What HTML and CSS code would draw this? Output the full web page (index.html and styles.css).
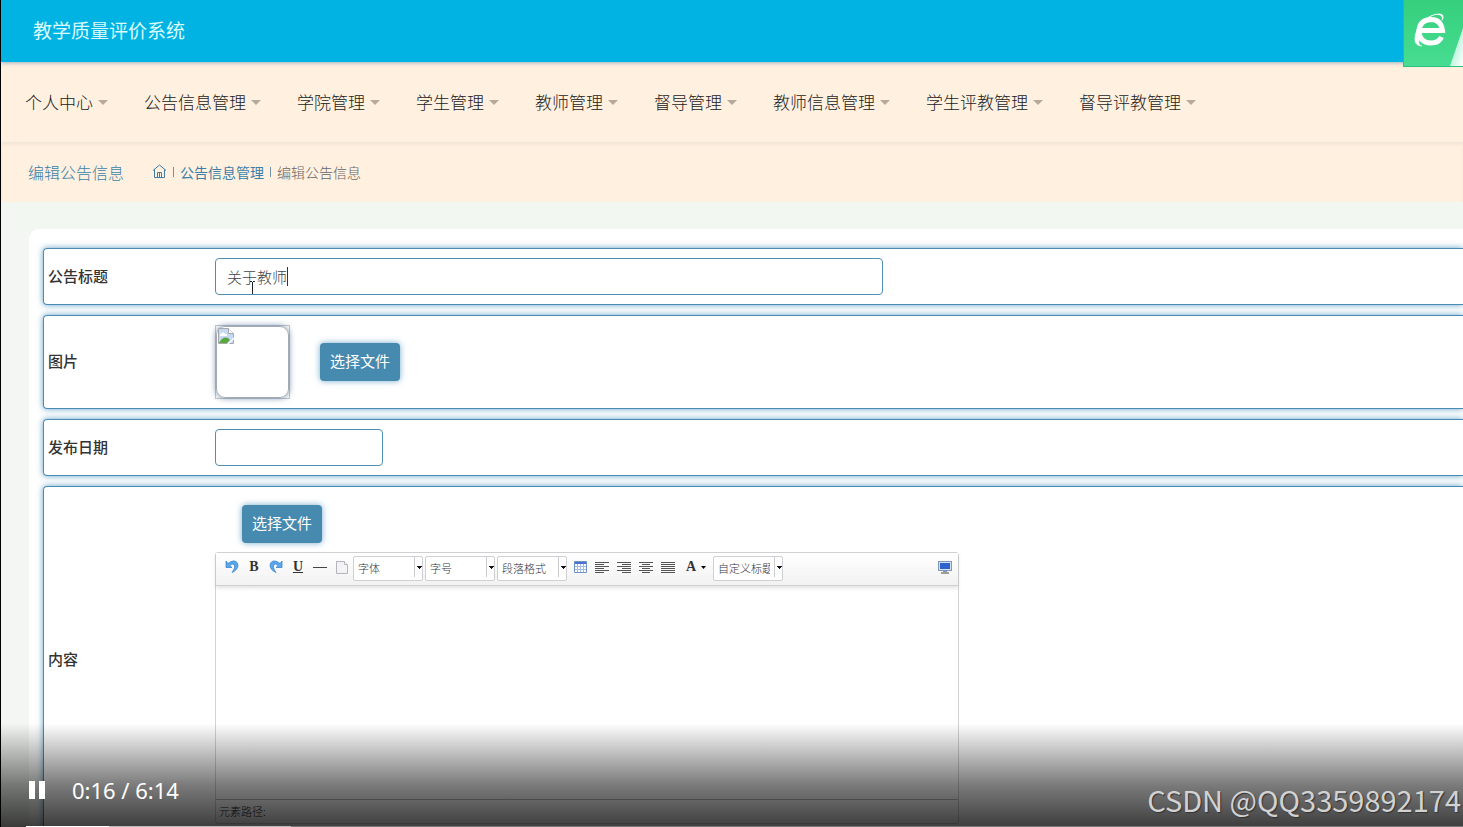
FILE: index.html
```html
<!DOCTYPE html>
<html lang="zh-CN">
<head>
<meta charset="utf-8">
<title>教学质量评价系统</title>
<link rel="stylesheet" href="styles.css">
</head>
<body>
<div class="player">
  <div class="screen">
    <header class="topbar"><h1 class="brand">教学质量评价系统</h1></header>
    <nav class="menu">
      <a class="menu-item" href="#">个人中心</a>
      <a class="menu-item" href="#">公告信息管理</a>
      <a class="menu-item" href="#">学院管理</a>
      <a class="menu-item" href="#">学生管理</a>
      <a class="menu-item" href="#">教师管理</a>
      <a class="menu-item" href="#">督导管理</a>
      <a class="menu-item" href="#">教师信息管理</a>
      <a class="menu-item" href="#">学生评教管理</a>
      <a class="menu-item" href="#">督导评教管理</a>
    </nav>
    <div class="crumbs">
      <h2 class="page-title">编辑公告信息</h2>
      <div class="trail">
        <a class="home" href="#" aria-label="首页"><svg width="15" height="15" viewBox="0 0 15 15" fill="none" stroke="currentColor"><path d="M1 6.5 7.5 1 14 6.5M2.5 5.5v8h10v-8M5.5 13.500v-5h4v5M7.500 8.500v5"/></svg></a>
        <span class="sep"></span>
        <a class="crumb" href="#">公告信息管理</a>
        <span class="sep"></span>
        <span class="current">编辑公告信息</span>
      </div>
    </div>
    <main class="content">
      <form class="card">
        <div class="row">
          <label class="label" for="title">公告标题</label>
          <input class="input input-wide" id="title" type="text" value="关于教师">
          <span class="caret"></span>
          <svg class="pointer" width="5" height="14" viewBox="0 0 5 14" fill="none" stroke="#222"><path d="M0 .5h2M3 .5h2M2.500 1v12"/></svg>
        </div>
        <div class="row">
          <span class="label">图片</span>
          <div class="thumb-frame"><div class="thumb">
            <svg width="16" height="16" viewBox="0 0 16 16"><path d="M.5.5h10l5 5v10H.5z" fill="#c5d8f5" stroke="#a8a8a8"/><path d="M10.500.5v5h5" fill="#fff" stroke="#a8a8a8"/><path d="M2 7q0-2 2-2 2-2 3 1h2v2H2z" fill="#fff"/><path d="M1 15q4-7 9-5l2 2-3 3z" fill="#58a83d"/><path d="m9 16 7-7v2l-5 5z" fill="#fff"/></svg>
          </div></div>
          <button class="btn" type="button">选择文件</button>
        </div>
        <div class="row">
          <label class="label" for="date">发布日期</label>
          <input class="input input-date" id="date" type="text">
        </div>
        <div class="row">
          <span class="label">内容</span>
          <div class="rich">
            <button class="btn btn-upload" type="button">选择文件</button>
            <div class="editor">
              <div class="toolbar">
                <button class="tool" type="button" aria-label="撤销"><svg width="14" height="14" viewBox="0 0 14 14"><path d="M1 1v6.500h6L4.800 5.500Q7 3 9 4.500q2 2.500-2 8 6-2.500 6-7.500Q12 .5 8 1 5 1.500 3 3.500z" fill="#5aa7ee" stroke="#2c7cc9" stroke-width=".7"/></svg></button>
                <button class="tool serif" type="button">B</button>
                <button class="tool" type="button" aria-label="重做"><svg width="14" height="14" viewBox="0 0 14 14"><path transform="matrix(-1 0 0 1 14 0)" d="M1 1v6.500h6L4.800 5.500Q7 3 9 4.500q2 2.500-2 8 6-2.500 6-7.500Q12 .5 8 1 5 1.500 3 3.500z" fill="#5aa7ee" stroke="#2c7cc9" stroke-width=".7"/></svg></button>
                <button class="tool serif underline" type="button">U</button>
                <button class="tool" type="button" aria-label="分隔线"><svg width="14" height="14"><path d="M0 7.500h14" stroke="#444"/></svg></button>
                <button class="tool" type="button" aria-label="新建"><svg width="12" height="14" viewBox="0 0 12 14"><path d="M.5 1.500h8l3 3v9H.5z" fill="#f3f3f6" stroke="#b5b5bd"/><path d="M8.500 1.500v3h3" fill="#fff" stroke="#b5b5bd"/></svg></button>
                <select class="pick" aria-label="字体"><option>字体</option></select>
                <select class="pick" aria-label="字号"><option>字号</option></select>
                <select class="pick" aria-label="段落格式"><option>段落格式</option></select>
                <button class="tool" type="button" aria-label="表格"><svg width="13" height="12" viewBox="0 0 13 12"><path d="M.5.5h12v11H.5z" fill="#fff" stroke="#6f93c9"/><path d="M1 1h11v2H1z" fill="#4474cf"/><path d="M1 5.500h11M1 8.500h11M3.500 3v8M6.500 3v8M9.500 3v8" stroke="#a4bbe0"/></svg></button>
                <button class="tool" type="button" aria-label="左对齐"><svg width="14" height="12"><path d="M0 1.500h14M0 3.500h9M0 5.500h14M0 7.500h9M0 9.500h14M0 11.500h9" stroke="#555"/></svg></button>
                <button class="tool" type="button" aria-label="右对齐"><svg width="14" height="12"><path d="M0 1.500h14M5 3.500h9M0 5.500h14M5 7.500h9M0 9.500h14M5 11.500h9" stroke="#555"/></svg></button>
                <button class="tool" type="button" aria-label="居中"><svg width="14" height="12"><path d="M0 1.500h14M3 3.500h8M0 5.500h14M3 7.500h8M0 9.500h14M3 11.500h8" stroke="#555"/></svg></button>
                <button class="tool" type="button" aria-label="两端对齐"><svg width="14" height="12"><path d="M0 1.500h14M0 3.500h14M0 5.500h14M0 7.500h14M0 9.500h14M0 11.500h14" stroke="#555"/></svg></button>
                <button class="tool serif color" type="button">A<svg width="5" height="3"><path d="M0 0h5L2.500 3z"/></svg></button>
                <select class="pick" aria-label="自定义标题"><option>自定义标题</option></select>
                <button class="tool full" type="button" aria-label="全屏"><svg width="14" height="13" viewBox="0 0 14 13"><rect x=".5" y=".5" width="13" height="9" fill="#d4e1f4" stroke="#7f97bb"/><path d="M2 2h10v6H2z" fill="#2f63cc"/><path d="M5 10h4v1H5z" fill="#7f97bb"/><path d="M3 12h8" stroke="#444"/></svg></button>
              </div>
              <div class="edit-area" contenteditable="true" role="textbox" aria-label="内容"></div>
              <div class="path">元素路径:</div>
            </div>
          </div>
        </div>
      </form>
    </main>
  </div>
  <div class="browser-badge">
    <svg width="60" height="67" viewBox="0 0 60 67"><defs><linearGradient id="mint" x1="0" y1="0" x2="0" y2="1"><stop offset="0" stop-color="#35cf7d"/><stop offset="1" stop-color="#48dd92"/></linearGradient><linearGradient id="fold" x1="0" y1="0" x2="1" y2="1"><stop offset="0" stop-color="#86ecc0"/><stop offset="1" stop-color="#fff"/></linearGradient></defs><path d="M0 0h60v67H0z" fill="url(#mint)"/><path d="M60 28v38H47z" fill="url(#fold)"/><path d="M0 66.500h60M.5 0v67" stroke="#27c47c"/><path d="M16 30.500h23.500Q38 19.500 28 19.500 16.500 20 16 31q.5 12 12 12 8 0 10.500-6" fill="none" stroke="#fff" stroke-width="5"/><path d="M25 17.500q9-5 13-2 2 2 1 5 3-5-1-6.500-6-1-13 3.500M16 25q-5 10-4 16 1 5 7 5-4-1-3-6z" fill="#fff" stroke="#fff" stroke-width=".5"/></svg>
  </div>
  <div class="controls">
    <button class="pause" type="button" aria-label="暂停"><svg width="16" height="18"><path d="M0 0h6v18H0zM10 0h6v18h-6z" fill="#fff"/></svg></button>
    <span class="time">0:16 / 6:14</span>
    <span class="watermark">CSDN @QQ3359892174</span>
    <div class="progress"><span class="played"></span><span class="buffered"></span></div>
  </div>
</div>
</body>
</html>
```
FILE: styles.css
```css
* { box-sizing: border-box; }
body { margin: 0; font-family: "Noto Sans CJK SC", sans-serif; color: #333; }
button, input, select { font-family: inherit; margin: 0; }
svg { display: block; flex: none; }
a { text-decoration: none; }
.player { position: relative; height: 100vh; overflow: hidden; background: #f2f7f1; border-left: 1px solid #000; }
.topbar { position: relative; z-index: 1; height: 62px; display: flex; align-items: center; padding: 0 32px 2px; background: #00b3e2; box-shadow: 0 1px 4px rgba(0, 90, 150, .4); }
.brand { margin: 0; font-size: 19px; line-height: 28px; font-weight: 400; color: #d9fcff; }
.menu { height: 81px; display: flex; align-items: center; gap: 36px; padding: 0 24px; background: #fff0df; border-bottom: 1px solid #f0e8dc; }
.menu-item { display: flex; align-items: center; gap: 5px; font-size: 17px; line-height: 24px; font-weight: 300; color: #222; white-space: nowrap; }
.menu-item::after { content: ""; border: 5px solid transparent; border-top-color: #b5aa9c; border-bottom: 0; }
.crumbs { height: 59px; display: flex; align-items: center; gap: 28px; padding: 0 27px 2px; background: #fff0df; box-shadow: inset 0 2px 3px rgba(150, 140, 120, .08); }
.page-title { margin: 0; font-size: 16px; line-height: 24px; font-weight: 300; color: #3b7fa8; }
.trail { display: flex; align-items: center; gap: 6px; font-size: 14px; line-height: 20px; font-weight: 300; color: #666; }
.home, .crumb { color: #3b7fa8; }
.crumb { font-weight: 400; }
.sep { width: 1px; height: 10px; background: #6d91a8; }
.content { padding: 27px 0 0 28px; }
.card { display: flex; flex-direction: column; gap: 10px; padding: 19px 0 20px 14px; background: #fff; border-top-left-radius: 10px; }
.row { position: relative; display: flex; align-items: center; padding: 9px 4px; border: 1px solid #4a8bb3; border-right: 0; border-radius: 4px 0 0 4px; box-shadow: 0 0 6px rgba(60, 137, 184, .8); }
.label { flex: none; width: 167px; padding-bottom: 2px; font-size: 15px; line-height: 24px; font-weight: 500; }
.input { height: 37px; padding: 0 11px; border: 1px solid #4f8fb4; border-radius: 4px; background: #fff; font-size: 15px; font-weight: 300; color: #444; outline: 0; }
.input-wide { width: 668px; }
.input-date { width: 168px; }
.caret { position: absolute; left: 243px; top: 18px; width: 1px; height: 19px; background: #333; }
.pointer { position: absolute; left: 206px; top: 32px; }
.thumb-frame { border: 1px solid #c5c8cb; margin-right: 30px; }
.thumb { width: 73px; height: 72px; padding: 1px; border: 1px solid #a4abb2; border-radius: 9px; box-shadow: 0 0 6px rgba(60, 100, 140, .7); }
.btn { width: 80px; height: 38px; padding: 0 0 3px; border: 0; border-radius: 4px; background: #478ab0; box-shadow: 0 0 6px rgba(60, 137, 184, .7); color: #fff; font-size: 15px; font-weight: 400; }
.rich { display: flex; flex-direction: column; width: 744px; padding-top: 9px; }
.btn-upload { margin: 0 0 9px 27px; }
.editor { border: 1px solid #d2d3d6; border-radius: 3px; }
.toolbar { display: flex; align-items: flex-start; height: 33px; padding: 3px 2px 0 5px; background: linear-gradient(#fff, #f2f2f3); border-bottom: 1px solid #d0d0d2; box-shadow: 0 2px 4px rgba(0, 0, 0, .12); }
.tool { display: flex; align-items: center; justify-content: center; width: 22px; height: 22px; flex: none; padding: 0; border: 0; background: none; color: #333; }
.serif { font-family: "Liberation Serif", serif; font-size: 14px; font-weight: 700; }
.underline { text-decoration: underline; }
.color { width: 28px; gap: 5px; margin: 0 3px; }
.pick {
  width: 70px; height: 25px; margin-right: 2px; padding: 0 12px 2px 4px;
  border: 1px solid #d0d1d4; border-radius: 2px; appearance: none;
  color: #334; font-size: 11px; font-weight: 300;
  background-color: #fff;
  background-image: conic-gradient(from 315deg at 50% 100%, #111 0 90deg, transparent 90deg), linear-gradient(#ccc, #ccc);
  background-position: 63px 9px, 60px 0;
  background-size: 5px 3px, 1px 20px;
  background-repeat: no-repeat;
}
.full { margin-left: auto; }
.edit-area { height: 213px; outline: 0; }
.path { height: 24px; padding-left: 3px; border-top: 1px solid #bbb; font-size: 11px; line-height: 23px; font-weight: 300; color: #223; }
.browser-badge { position: absolute; z-index: 2; top: 0; right: 0; }
.controls { position: absolute; z-index: 3; left: -1px; right: 0; bottom: 0; height: 104px; display: flex; align-items: flex-end; gap: 27px; padding: 0 2px 20px 29px; background: linear-gradient(transparent, rgba(0, 0, 0, .52) 60%, rgba(0, 0, 0, .76)); }
.pause { height: 34px; padding: 0; border: 0; background: none; }
.time { font-family: "Noto Sans", sans-serif; font-size: 22px; line-height: 34px; color: #fff; }
.watermark { margin-left: auto; margin-bottom: -9px; font-size: 29px; line-height: 34px; font-weight: 400; color: #d2d2d2; text-shadow: 1px 1px 1px #333; }
.progress { position: absolute; left: 26px; right: 0; bottom: 0; height: 1px; display: flex; background: #777; }
.played { width: 83px; background: #fff; }
.buffered { width: 182px; background: #bbb; }
```
